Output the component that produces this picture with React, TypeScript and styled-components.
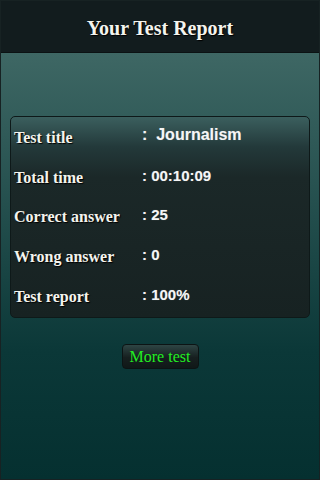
import React from "react"
import styled, { createGlobalStyle } from "styled-components"

type Row = {
  label: string
  value: string
  big?: boolean
}

const rows: Row[] = [
  { label: "Test title", value: ":  Journalism", big: true },
  { label: "Total time", value: ": 00:10:09" },
  { label: "Correct answer", value: ": 25" },
  { label: "Wrong answer", value: ": 0" },
  { label: "Test report", value: ": 100%" },
]

function App() {
  return (
    <>
      <GlobalStyle />
      <Page>
        <Header>Your Test Report</Header>
        <Body>
          <Card>
            {rows.map((row) => (
              <ReportRow key={row.label}>
                <Label>{row.label}</Label>
                <Value $big={row.big}>{row.value}</Value>
              </ReportRow>
            ))}
          </Card>
          <MoreButton>More test</MoreButton>
        </Body>
      </Page>
    </>
  )
}

export default App

const GlobalStyle = createGlobalStyle`
  html, body {
    margin: 0;
    padding: 0;
    background: #111a1b;
  }
`

const Page = styled.div`
  width: 320px;
  height: 480px;
  box-sizing: border-box;
  border: 1px solid #172223;
  display: flex;
  flex-direction: column;
  overflow: hidden;
`

const Header = styled.h1`
  margin: 0;
  height: 52px;
  flex: none;
  display: flex;
  align-items: center;
  justify-content: center;
  padding-top: 4px;
  box-sizing: border-box;
  background: #121c1e;
  border-bottom: 1px solid #0b1213;
  color: #f4f4ee;
  font-family: "Liberation Serif", serif;
  font-weight: bold;
  font-size: 20px;
  text-shadow: 1px 1px 1px #000;
`

const Body = styled.div`
  flex: 1;
  background: linear-gradient(#3e6764, #0b3838 70%, #053030);
  padding: 63px 9px 0 9px;
  display: flex;
  flex-direction: column;
  align-items: center;
`

const Card = styled.div`
  align-self: stretch;
  height: 202px;
  box-sizing: border-box;
  border: 1px solid #0e1919;
  border-radius: 5px;
  background: linear-gradient(#3b5f5e 0px, #23393a 30px, #1b2828 60px, #172222 100%);
  padding: 3px 0 0 3px;
  display: flex;
  flex-direction: column;
  overflow: hidden;
`

const ReportRow = styled.div`
  flex: none;
  height: 39.7px;
  display: flex;
  align-items: flex-start;
`

const Label = styled.div`
  width: 128px;
  padding-top: 9px;
  color: #f4f4ee;
  font-family: "Liberation Serif", serif;
  font-weight: bold;
  font-size: 16px;
  text-shadow: 1px 1px 1px #000;
`

const Value = styled.div<{ $big?: boolean }>`
  color: #f6f6f6;
  font-family: "Liberation Sans", Arial, sans-serif;
  font-weight: bold;
  font-size: ${(p) => (p.$big ? "16px" : "15px")};
  padding-top: ${(p) => (p.$big ? "6px" : "7px")};
  white-space: pre;
  text-shadow: 0 0 1px rgba(255, 255, 255, 0.3);
`

const MoreButton = styled.button`
  margin-top: 26px;
  width: 77px;
  height: 25px;
  padding: 0;
  border: 1px solid #0c1414;
  border-radius: 4px;
  background: linear-gradient(#2e4544, #161f1f 55%, #101818);
  color: #22ee22;
  font-family: "Liberation Serif", serif;
  font-size: 16px;
  cursor: pointer;
`
